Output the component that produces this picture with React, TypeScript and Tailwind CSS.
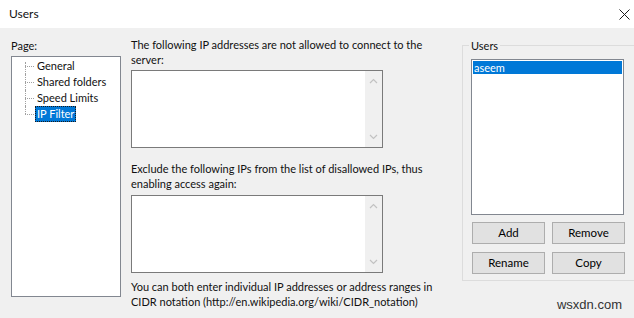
const font = { fontFamily: 'Lato, "Noto Sans", sans-serif' };

function TreeRow({ label, first, last, selected }: { label: string; first?: boolean; last?: boolean; selected?: boolean }) {
  return (
    <div className="flex h-4 items-center">
      <span className="relative w-[10px] self-stretch">
        <span
          className={`absolute left-0 border-l border-dotted border-[#a0a0a0] ${
            last ? "top-0 h-1/2" : first ? "top-[4px] bottom-0" : "top-0 h-full"
          }`}
        />
        <span className="absolute left-0 top-1/2 w-[9px] border-t border-dotted border-[#a0a0a0]" />
      </span>
      <span
        className={`whitespace-nowrap px-[1px] leading-[14px] ${
          selected ? "border border-dotted border-[#1a1a1a] bg-[#0078d7] text-white" : "border border-transparent"
        }`}
      >
        {label}
      </span>
    </div>
  );
}

function IpBox() {
  return (
    <div className="flex h-[78px] w-[252px] border border-[#7a7a7a] bg-white">
      <div className="flex-1" />
      <div className="flex w-[17px] flex-col items-center justify-between bg-[#f0f0f0] py-[7px]">
        <svg width="9" height="6" viewBox="0 0 9 6">
          <path d="M1 5 L4.5 1.5 L8 5" fill="none" stroke="#c2c2c2" strokeWidth="1.2" />
        </svg>
        <svg width="9" height="6" viewBox="0 0 9 6">
          <path d="M1 1 L4.5 4.5 L8 1" fill="none" stroke="#c2c2c2" strokeWidth="1.2" />
        </svg>
      </div>
    </div>
  );
}

function Btn({ children }: { children: React.ReactNode }) {
  return (
    <button className="flex h-[22px] w-[73px] items-center justify-center border border-[#adadad] bg-[#e1e1e1] text-[11.5px] text-black">
      {children}
    </button>
  );
}

export default function App() {
  return (
    <div className="relative h-[318px] w-[634px] overflow-hidden bg-[#f0f0f0] text-[11px] text-[#111]" style={font}>
      <div className="flex h-[28px] items-center justify-between bg-white pl-[9px] pr-[3px]">
        <span className="text-[12px]">Users</span>
        <svg width="11" height="11" viewBox="0 0 11 11" className="mr-[1px]">
          <path d="M0.5 0.5 L10.5 10.5 M10.5 0.5 L0.5 10.5" stroke="#1a1a1a" strokeWidth="1" />
        </svg>
      </div>

      <div className="flex">
        {/* page tree */}
        <div className="ml-[11px] mt-[10px] flex w-[110px] shrink-0 flex-col">
          <div className="leading-[16px]">Page:</div>
          <div className="mt-[2px] h-[241px] border border-[#828790] bg-white pl-[13px] pt-[1px]">
            <TreeRow label="General" first />
            <TreeRow label="Shared folders" />
            <TreeRow label="Speed Limits" />
            <TreeRow label="IP Filter" last selected />
          </div>
        </div>

        {/* ip filter */}
        <div className="ml-[10px] mt-[9px] flex w-[320px] shrink-0 flex-col whitespace-nowrap">
          <p className="leading-[15px]">
            The following IP addresses are not allowed to connect to the
            <br />
            server:
          </p>
          <div className="mt-[3px]">
            <IpBox />
          </div>
          <p className="mt-[13px] leading-[15px]">
            Exclude the following IPs from the list of disallowed IPs, thus
            <br />
            enabling access again:
          </p>
          <div className="mt-[4px]">
            <IpBox />
          </div>
          <p className="mt-[6px] leading-[15px]">
            You can both enter individual IP addresses or address ranges in
            <br />
            CIDR notation (http://en.wikipedia.org/wiki/CIDR_notation)
          </p>
        </div>

        {/* users group */}
        <div className="relative ml-[11px] mt-[17px] h-[236px] w-[200px] shrink-0 border border-[#dcdcdc] pl-[8px] pt-[13px]">
          <span className="absolute -top-[8px] left-[6px] bg-[#f0f0f0] px-[2px] leading-[15px]">Users</span>
          <div className="h-[156px] w-[153px] border border-[#828790] bg-white p-[1px]">
            <div className="h-[13px] bg-[#0078d7] pl-[1px] leading-[13px] text-white">aseem</div>
          </div>
          <div className="mt-[7px] grid w-[154px] grid-cols-[73px_73px] gap-x-[7px] gap-y-[8px] pl-[1px]">
            <Btn>Add</Btn>
            <Btn>Remove</Btn>
            <Btn>Rename</Btn>
            <Btn>Copy</Btn>
          </div>
        </div>
      </div>

      <span
        className="absolute bottom-[4px] right-[12px] text-[13px] text-[#333]"
        style={{ fontFamily: '"Liberation Sans", sans-serif' }}
      >
        wsxdn.com
      </span>
    </div>
  );
}
